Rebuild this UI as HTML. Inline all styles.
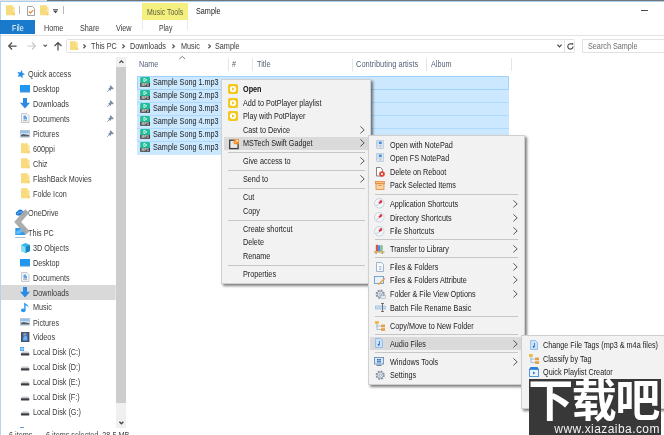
<!DOCTYPE html>
<html lang="en"><head><meta charset="utf-8"><title>Sample</title><style>
*{margin:0;padding:0;box-sizing:border-box}
html,body{width:664px;height:435px;overflow:hidden;background:#fff}
body{position:relative;font-family:"Liberation Sans","Noto Sans CJK SC",sans-serif;font-size:8.8px;color:#3a3a3a}
.a{position:absolute}
.t{position:absolute;white-space:nowrap;line-height:10px;height:10px;transform-origin:0 0;transform:scaleX(.823)}
.menu{position:absolute;background:#f2f2f2;border:1px solid #d0d0d0;box-shadow:2px 2px 2.500px rgba(0,0,0,.5)}
.sep{position:absolute;height:1px;background:#c6c6c6}
.hl{position:absolute;background:#d9d9d9}
.row{position:absolute;background:#cce8ff;border:1px solid #a9d6fc}
svg{position:absolute;overflow:visible}
</style></head><body>
<div id="w" style="position:absolute;left:0;top:0;width:664px;height:435px;filter:blur(.33px)">
<div class="a" style="left:-3.0px;top:-2.0px;width:50.0px;height:3.0px;background:#e4e4e4;"></div>
<div class="a" style="left:46.5px;top:-2.0px;width:621.0px;height:3.0px;background:#747474;"></div>
<div class="a" style="left:-3.0px;top:1.0px;width:670.0px;height:1.0px;background:#a9cdec;"></div>
<div class="a" style="left:-2.0px;top:2.0px;width:3.0px;height:440.0px;background:#b4d3ee;"></div>
<svg style="left:6.0px;top:5.0px" width="8.6" height="10.2" viewBox="0 0 9 10" preserveAspectRatio="none"><path d="M0 0.300h7.200v1.700H9v8H0z" fill="#f7db7d"/><path d="M7.200 2H9v8H7.200z" fill="#fae69f"/><path d="M7.200 7.500H9v2.500H7.200z" fill="#f3cf63"/></svg>
<div class="a" style="left:19.0px;top:6.0px;width:1.0px;height:8.0px;background:#b8b8b8;"></div>
<svg style="left:27px;top:5.5px" width="8" height="10" viewBox="0 0 8 10"><path d="M.5.5h5l2 2v7H.5z" fill="#fff" stroke="#8a8a8a" stroke-width=".8"/><path d="M2 5.5l1.5 1.6L6.3 4" fill="none" stroke="#e8842c" stroke-width="1.1"/></svg>
<svg style="left:40.1px;top:5.0px" width="8.4" height="10.2" viewBox="0 0 9 10" preserveAspectRatio="none"><path d="M0 0.300h7.200v1.700H9v8H0z" fill="#f7db7d"/><path d="M7.200 2H9v8H7.200z" fill="#fae69f"/><path d="M7.200 7.500H9v2.500H7.200z" fill="#f3cf63"/></svg>
<svg style="left:53.200px;top:9px" width="5" height="4.200" viewBox="0 0 5 4.200"><path d="M0 0h5v.8H0z" fill="#555"/><path d="M0 1.600h5L2.500 4.200z" fill="#444"/></svg>
<div class="a" style="left:63.0px;top:6.0px;width:1.0px;height:8.0px;background:#b8b8b8;"></div>
<div class="a" style="left:142.4px;top:3.2px;width:45.2px;height:16.6px;background:#f4f07f;"></div>
<div class="t" style="left:146.8px;top:6.7px;color:#5f5f3c;transform:scaleX(.79)">Music Tools</div>
<div class="t" style="left:195.7px;top:6.1px;color:#222">Sample</div>
<div class="a" style="left:641.0px;top:9.7px;width:6.5px;height:1.0px;background:#4a4a4a;"></div>
<div class="a" style="left:0.0px;top:20.0px;width:35.0px;height:14.3px;background:#1979ca;"></div>
<div class="t" style="left:11.5px;top:22.6px;color:#fff">File</div>
<div class="t" style="left:43.7px;top:22.6px;">Home</div>
<div class="t" style="left:80.0px;top:22.6px;">Share</div>
<div class="t" style="left:116.0px;top:22.6px;">View</div>
<div class="t" style="left:159.0px;top:22.6px;transform:scaleX(.78)">Play</div>
<div class="a" style="left:142.4px;top:20.0px;width:1.0px;height:10.0px;background:#eaeaea;"></div>
<div class="a" style="left:186.8px;top:20.0px;width:1.0px;height:10.0px;background:#eaeaea;"></div>
<div class="a" style="left:1.0px;top:34.5px;width:663.0px;height:1.0px;background:#e2e2e2;"></div>
<svg style="left:8.0px;top:42.0px" width="9" height="8" viewBox="0 0 9 8"><path d="M4 .5L.7 4 4 7.5M.7 4H8.600" fill="none" stroke="#505050" stroke-width="1.250"/></svg>
<svg style="left:27px;top:42px" width="9" height="8" viewBox="0 0 9 8"><path d="M5 .5L8.300 4 5 7.5M8.300 4H.4" fill="none" stroke="#c9c9c9" stroke-width="1.200"/></svg>
<svg style="left:43px;top:43.600px" width="4.500" height="3.500" viewBox="0 0 5 4"><path d="M.5 .8L2.500 2.800 4.500 .8" fill="none" stroke="#5a5a5a" stroke-width="1.200"/></svg>
<svg style="left:54px;top:41.5px" width="8" height="9" viewBox="0 0 8 9"><path d="M.5 4L4 .7 7.5 4M4 .7V8.600" fill="none" stroke="#505050" stroke-width="1.250"/></svg>
<div class="a" style="left:65.5px;top:38.5px;width:509.5px;height:14.0px;background:#fff;border:1px solid #e2e2e2;border-radius:1.5px"></div>
<div class="a" style="left:563.5px;top:39.0px;width:1.0px;height:13.0px;background:#e4e4e4;"></div>
<svg style="left:69.5px;top:41.0px" width="8" height="9" viewBox="0 0 9 10" preserveAspectRatio="none"><path d="M0 0.300h7.200v1.700H9v8H0z" fill="#f7db7d"/><path d="M7.200 2H9v8H7.200z" fill="#fae69f"/><path d="M7.200 7.500H9v2.500H7.200z" fill="#f3cf63"/></svg>
<svg style="left:82.5px;top:43.5px" width="2.8" height="4.6" viewBox="0 0 2.8 4.6"><path d="M.4 .4L2.4 2.3 .4 4.199999999999999" fill="none" stroke="#555" stroke-width="1.25"/></svg>
<div class="t" style="left:91.0px;top:40.8px;">This PC</div>
<svg style="left:121.5px;top:43.5px" width="2.8" height="4.6" viewBox="0 0 2.8 4.6"><path d="M.4 .4L2.4 2.3 .4 4.199999999999999" fill="none" stroke="#555" stroke-width="1.25"/></svg>
<div class="t" style="left:129.5px;top:40.8px;">Downloads</div>
<svg style="left:171.5px;top:43.5px" width="2.8" height="4.6" viewBox="0 0 2.8 4.6"><path d="M.4 .4L2.4 2.3 .4 4.199999999999999" fill="none" stroke="#555" stroke-width="1.25"/></svg>
<div class="t" style="left:180.7px;top:40.8px;">Music</div>
<svg style="left:207.5px;top:43.5px" width="2.8" height="4.6" viewBox="0 0 2.8 4.6"><path d="M.4 .4L2.4 2.3 .4 4.199999999999999" fill="none" stroke="#555" stroke-width="1.25"/></svg>
<div class="t" style="left:215.0px;top:40.8px;">Sample</div>
<svg style="left:556.5px;top:44.3px" width="5" height="4" viewBox="0 0 5 4"><path d="M.4 .7L2.5 2.9 4.6 .7" fill="none" stroke="#444" stroke-width="1.15"/></svg>
<svg style="left:566.5px;top:42.5px" width="7" height="7" viewBox="0 0 7 7"><path d="M6 3.5A2.6 2.6 0 1 1 4.6 1.2" fill="none" stroke="#4a4a4a" stroke-width="1.1"/><path d="M3.8 0h2.4v2.4z" fill="#555"/></svg>
<div class="a" style="left:582.0px;top:38.5px;width:90.0px;height:14.0px;background:#fff;border:1px solid #e2e2e2"></div>
<div class="t" style="left:588.0px;top:40.6px;color:#6d6d6d">Search Sample</div>
<div class="a" style="left:116.1px;top:57.0px;width:9.7px;height:371.0px;background:#f0f0f0;"></div>
<div class="a" style="left:116.1px;top:67.0px;width:9.7px;height:335.5px;background:#cdcdcd;"></div>
<svg style="left:118.600px;top:60.200px" width="4.800" height="3.600" viewBox="0 0 6 4"><path d="M.5 3.300L3 .8 5.500 3.300" fill="none" stroke="#444" stroke-width="1.600"/></svg>
<svg style="left:118.600px;top:420.800px" width="4.800" height="3.600" viewBox="0 0 6 4"><path d="M.5 .7L3 3.200 5.500 .7" fill="none" stroke="#444" stroke-width="1.600"/></svg>
<div class="a" style="left:1.0px;top:285.0px;width:114.0px;height:14.8px;background:#d9d9d9;"></div>
<div class="a" style="left:115.0px;top:285.0px;width:1.2px;height:14.8px;background:#e6e6e6;"></div>
<svg style="left:16.6px;top:69.6px" width="8" height="8" viewBox="0 0 8 8"><path d="M4 0l1.2 2.7 2.8.3-2.1 1.9.6 2.9L4 6.3 1.5 7.8l.6-2.9L0 3l2.8-.3z" fill="#2a8fe8" transform="rotate(14 4 4)"/></svg>
<div class="t" style="left:28.3px;top:68.9px;">Quick access</div>
<svg style="left:20.0px;top:84.7px" width="10" height="8" viewBox="0 0 10 8"><rect x="0" y="0" width="10" height="6.6" fill="#1e96f2"/><rect x="0" y="6.4" width="10" height="1" fill="#1478cf"/></svg>
<div class="t" style="left:33.3px;top:84.4px;">Desktop</div>
<svg style="left:20.0px;top:98.2px" width="10" height="10.500" viewBox="0 0 10 10.500"><path d="M3 0h4v4.800h3L5 10.500 0 4.800h3z" fill="#2b8be3"/></svg>
<div class="t" style="left:33.3px;top:99.2px;">Downloads</div>
<svg style="left:20.8px;top:113.3px" width="8.500" height="10" viewBox="0 0 8.500 10"><path d="M.5.500h5.500l2 2v7H.5z" fill="#f4f5f6" stroke="#b9bdc2" stroke-width=".8"/><path d="M2.500 2.500h2.500v1.500h1v2.500h-3.500z" fill="#5ea4e6"/><path d="M2.200 7.600h4" stroke="#8e979f" stroke-width=".7"/></svg>
<div class="t" style="left:33.3px;top:114.0px;">Documents</div>
<svg style="left:20.0px;top:129.5px" width="10" height="7.500" viewBox="0 0 10 7.500"><rect x=".4" y=".4" width="9.200" height="6.700" fill="#e4eef8" stroke="#a8b4c0" stroke-width=".7"/><rect x="1" y="1" width="8" height="2.300" fill="#8fc2ee"/><path d="M1 6.500V4.800l2.500-.8 5.500 1v1.500z" fill="#55606b"/></svg>
<div class="t" style="left:33.3px;top:129.0px;">Pictures</div>
<svg style="left:20.9px;top:143.2px" width="8.4" height="10.2" viewBox="0 0 9 10" preserveAspectRatio="none"><path d="M0 0.300h7.200v1.700H9v8H0z" fill="#f7db7d"/><path d="M7.200 2H9v8H7.200z" fill="#fae69f"/><path d="M7.200 7.500H9v2.500H7.200z" fill="#f3cf63"/></svg>
<div class="t" style="left:33.3px;top:144.0px;">600ppi</div>
<svg style="left:20.9px;top:158.1px" width="8.4" height="10.2" viewBox="0 0 9 10" preserveAspectRatio="none"><path d="M0 0.300h7.200v1.700H9v8H0z" fill="#f7db7d"/><path d="M7.200 2H9v8H7.200z" fill="#fae69f"/><path d="M7.200 7.500H9v2.500H7.200z" fill="#f3cf63"/></svg>
<div class="t" style="left:33.3px;top:158.9px;">Chiz</div>
<svg style="left:20.9px;top:172.9px" width="8.4" height="10.2" viewBox="0 0 9 10" preserveAspectRatio="none"><path d="M0 0.300h7.200v1.700H9v8H0z" fill="#f7db7d"/><path d="M7.200 2H9v8H7.200z" fill="#fae69f"/><path d="M7.200 7.500H9v2.500H7.200z" fill="#f3cf63"/></svg>
<div class="t" style="left:33.3px;top:173.7px;">FlashBack Movies</div>
<svg style="left:20.9px;top:187.8px" width="8.4" height="10.2" viewBox="0 0 9 10" preserveAspectRatio="none"><path d="M0 0.300h7.200v1.700H9v8H0z" fill="#f7db7d"/><path d="M7.200 2H9v8H7.200z" fill="#fae69f"/><path d="M7.200 7.500H9v2.500H7.200z" fill="#f3cf63"/></svg>
<div class="t" style="left:33.3px;top:188.6px;">Folde Icon</div>
<svg style="left:14.6px;top:208.8px" width="10.500" height="6.500" viewBox="0 0 11 7" preserveAspectRatio="none"><path d="M2.500 7a2.300 2.300 0 0 1 .2-4.500A3 3 0 0 1 8.300 2.200 2.400 2.400 0 0 1 8.800 7z" fill="#1b7bdc"/><path d="M2 5.500C4 3.500 6 3 8 3.200" stroke="#dbeafb" stroke-width=".6" fill="none"/></svg>
<div class="t" style="left:28.0px;top:207.9px;">OneDrive</div>
<svg style="left:14.7px;top:228.0px" width="10.500" height="10" viewBox="0 0 10.500 10"><rect x=".3" y="0" width="10" height="7" fill="#2e9bf0"/><path d="M1.300 6V3.500L6 1h3.200v1.500L4 6z" fill="#62bdf9"/><rect x="0" y="9" width="10.500" height=".9" fill="#a9bccd"/></svg>
<div class="t" style="left:28.0px;top:228.4px;">This PC</div>
<svg style="left:20.5px;top:242.6px" width="9" height="10" viewBox="0 0 9 10"><path d="M4.500 0L9 2v6L4.500 10 0 8V2z" fill="#37b6e6"/><path d="M4.500 4L9 2v6L4.500 10z" fill="#1587c4"/><path d="M0 2l4.500 2V10L0 8z" fill="#8adcf5"/></svg>
<div class="t" style="left:33.3px;top:243.3px;">3D Objects</div>
<svg style="left:20.0px;top:258.5px" width="10" height="8" viewBox="0 0 10 8"><rect x="0" y="0" width="10" height="6.6" fill="#1e96f2"/><rect x="0" y="6.4" width="10" height="1" fill="#1478cf"/></svg>
<div class="t" style="left:33.3px;top:258.2px;">Desktop</div>
<svg style="left:20.8px;top:272.3px" width="8.500" height="10" viewBox="0 0 8.500 10"><path d="M.5.500h5.500l2 2v7H.5z" fill="#f4f5f6" stroke="#b9bdc2" stroke-width=".8"/><path d="M2.500 2.500h2.500v1.500h1v2.500h-3.500z" fill="#5ea4e6"/><path d="M2.200 7.600h4" stroke="#8e979f" stroke-width=".7"/></svg>
<div class="t" style="left:33.3px;top:273.0px;">Documents</div>
<svg style="left:20.0px;top:286.9px" width="10" height="10.500" viewBox="0 0 10 10.500"><path d="M3 0h4v4.800h3L5 10.500 0 4.800h3z" fill="#2b8be3"/></svg>
<div class="t" style="left:33.3px;top:287.9px;">Downloads</div>
<svg style="left:21.2px;top:301.7px" width="8" height="10.500" viewBox="0 0 7 10" preserveAspectRatio="none"><path d="M2.800 0c.6 2 3.800 2.300 3.800 5.200-.7-1.600-2.100-1.800-2.600-1.900V8A2 1.700 0 1 1 2.800 6.400z" fill="#2a97f0"/></svg>
<div class="t" style="left:33.3px;top:302.4px;">Music</div>
<svg style="left:20.0px;top:318.1px" width="10" height="7.500" viewBox="0 0 10 7.500"><rect x=".4" y=".4" width="9.200" height="6.700" fill="#e4eef8" stroke="#a8b4c0" stroke-width=".7"/><rect x="1" y="1" width="8" height="2.300" fill="#8fc2ee"/><path d="M1 6.500V4.800l2.500-.8 5.500 1v1.500z" fill="#55606b"/></svg>
<div class="t" style="left:33.3px;top:317.6px;">Pictures</div>
<svg style="left:20.9px;top:331.9px" width="8.400" height="10" viewBox="0 0 9 10" preserveAspectRatio="none"><rect width="9" height="10" fill="#4a4f57"/><rect x="1.800" y=".8" width="5.400" height="8.400" fill="#3f7fd0"/><path d="M2.500 6l2-2.500 2 1.500v3h-4z" fill="#6fb0ee"/><rect x="3" y="1.500" width="2" height="1.500" fill="#e8a33a"/></svg>
<div class="t" style="left:33.3px;top:331.8px;">Videos</div>
<svg style="left:20.0px;top:347.1px" width="10" height="9" viewBox="0 0 10 9"><path d="M0 0h1.800v1.800H0zM2.300 0h1.800v1.800H2.300zM0 2.300h1.800v1.800H0zM2.300 2.300h1.800v1.800H2.300z" fill="#3a9ff3"/><path d="M2 4.600h6.200L9.300 6.300H.9z" fill="#c6cacf"/><rect x=".9" y="6.200" width="8.400" height="2.300" rx=".4" fill="#3b3f44"/></svg>
<div class="t" style="left:33.3px;top:347.3px;">Local Disk (C:)</div>
<svg style="left:20.0px;top:362.0px" width="10" height="9" viewBox="0 0 10 9"><path d="M2 4.600h6.200L9.300 6.300H.9z" fill="#c6cacf"/><rect x=".9" y="6.200" width="8.400" height="2.300" rx=".4" fill="#3b3f44"/></svg>
<div class="t" style="left:33.3px;top:362.2px;">Local Disk (D:)</div>
<svg style="left:20.0px;top:376.9px" width="10" height="9" viewBox="0 0 10 9"><path d="M2 4.600h6.200L9.300 6.300H.9z" fill="#c6cacf"/><rect x=".9" y="6.200" width="8.400" height="2.300" rx=".4" fill="#3b3f44"/></svg>
<div class="t" style="left:33.3px;top:377.1px;">Local Disk (E:)</div>
<svg style="left:20.0px;top:391.7px" width="10" height="9" viewBox="0 0 10 9"><path d="M2 4.600h6.200L9.300 6.300H.9z" fill="#c6cacf"/><rect x=".9" y="6.200" width="8.400" height="2.300" rx=".4" fill="#3b3f44"/></svg>
<div class="t" style="left:33.3px;top:391.9px;">Local Disk (F:)</div>
<svg style="left:20.0px;top:406.6px" width="10" height="9" viewBox="0 0 10 9"><path d="M2 4.600h6.200L9.300 6.300H.9z" fill="#c6cacf"/><rect x=".9" y="6.200" width="8.400" height="2.300" rx=".4" fill="#3b3f44"/></svg>
<div class="t" style="left:33.3px;top:406.8px;">Local Disk (G:)</div>
<svg style="left:107.300px;top:85.0px" width="7" height="7" viewBox="0 0 7 7"><path d="M3.600 .3L6.700 3.400 5.700 4.400 5 3.800 3.600 5.200 3.400 6.200 .9 3.600 1.800 3.400 3.200 2 2.600 1.300z" fill="#7a8ca6"/><path d="M2.300 4.700L.2 6.800" stroke="#7a8ca6" stroke-width=".8"/></svg>
<svg style="left:107.300px;top:99.8px" width="7" height="7" viewBox="0 0 7 7"><path d="M3.600 .3L6.700 3.400 5.700 4.400 5 3.800 3.600 5.200 3.400 6.200 .9 3.600 1.800 3.400 3.200 2 2.600 1.300z" fill="#7a8ca6"/><path d="M2.300 4.700L.2 6.800" stroke="#7a8ca6" stroke-width=".8"/></svg>
<svg style="left:107.300px;top:114.6px" width="7" height="7" viewBox="0 0 7 7"><path d="M3.600 .3L6.700 3.400 5.700 4.400 5 3.800 3.600 5.200 3.400 6.200 .9 3.600 1.800 3.400 3.200 2 2.600 1.300z" fill="#7a8ca6"/><path d="M2.300 4.700L.2 6.800" stroke="#7a8ca6" stroke-width=".8"/></svg>
<svg style="left:107.300px;top:129.6px" width="7" height="7" viewBox="0 0 7 7"><path d="M3.600 .3L6.700 3.400 5.700 4.400 5 3.800 3.600 5.200 3.400 6.200 .9 3.600 1.800 3.400 3.200 2 2.600 1.300z" fill="#7a8ca6"/><path d="M2.300 4.700L.2 6.800" stroke="#7a8ca6" stroke-width=".8"/></svg>
<div class="a" style="left:20.0px;top:426.5px;width:4.0px;height:1.0px;background:#5aa0e0;"></div>
<svg style="left:0;top:200px" width="40" height="45" viewBox="0 200 40 45"><path d="M27.200 211L17.700 222 27.600 233" fill="none" stroke="#a9a9a9" stroke-width="5.200" stroke-linejoin="miter" opacity=".96"/></svg>
<div class="t" style="left:9.0px;top:430.3px;color:#444">6 items</div>
<div class="t" style="left:46.0px;top:430.3px;color:#444">6 items selected&nbsp; 28.5 MB</div>
<div class="t" style="left:139.0px;top:59.0px;color:#56637a">Name</div>
<div class="t" style="left:232.0px;top:59.0px;color:#56637a">#</div>
<div class="t" style="left:257.0px;top:59.0px;color:#56637a">Title</div>
<div class="t" style="left:356.3px;top:59.0px;color:#56637a;transform:scaleX(.85)">Contributing artists</div>
<div class="t" style="left:430.7px;top:59.0px;color:#56637a">Album</div>
<svg style="left:178.500px;top:56px" width="6.500" height="3.200" viewBox="0 0 6 3"><path d="M.3 2.800L3 .4 5.700 2.800" fill="none" stroke="#6a6a6a" stroke-width=".8"/></svg>
<div class="a" style="left:228.0px;top:58.0px;width:1.0px;height:13.0px;background:#e5e5e5;"></div>
<div class="a" style="left:252.3px;top:58.0px;width:1.0px;height:13.0px;background:#e5e5e5;"></div>
<div class="a" style="left:351.8px;top:58.0px;width:1.0px;height:13.0px;background:#e5e5e5;"></div>
<div class="a" style="left:426.0px;top:58.0px;width:1.0px;height:13.0px;background:#e5e5e5;"></div>
<div class="a" style="left:510.8px;top:58.0px;width:1.0px;height:13.0px;background:#e5e5e5;"></div>
<div class="a" style="left:137.1px;top:76.0px;width:372.4px;height:78.2px;background:#cce8ff;border-radius:1px"></div>
<div class="a" style="left:137.1px;top:89.0px;width:372.4px;height:1.0px;background:#b0dafd;"></div>
<div class="a" style="left:137.1px;top:102.0px;width:372.4px;height:1.0px;background:#b0dafd;"></div>
<div class="a" style="left:137.1px;top:115.0px;width:372.4px;height:1.0px;background:#b0dafd;"></div>
<div class="a" style="left:137.1px;top:128.0px;width:372.4px;height:1.0px;background:#b0dafd;"></div>
<div class="a" style="left:137.1px;top:141.0px;width:372.4px;height:1.0px;background:#b0dafd;"></div>
<div class="a" style="left:137.1px;top:154.0px;width:372.4px;height:1.0px;background:#b0dafd;opacity:.6"></div>
<div class="a" style="left:137.1px;top:76.0px;width:372.4px;height:13.6px;background:transparent;border:1px solid #9fd2fd;border-radius:1px"></div>
<svg style="left:139.800px;top:77.2px" width="10.200" height="9.800" viewBox="0 0 10 10"><rect width="10" height="7" rx="1.200" fill="#1fbf98"/><path d="M3.800 1.200L6.800 3 3.800 4.800z" fill="none" stroke="#fff" stroke-width=".8"/><rect y="6" width="10" height="4" fill="#3a3f3e"/><text x="5" y="9.300" text-anchor="middle" font-family="Liberation Sans, sans-serif" font-size="3.600" font-weight="700" fill="#ececec">MP3</text></svg>
<div class="t" style="left:152.6px;top:77.4px;color:#222">Sample Song 1.mp3</div>
<svg style="left:139.800px;top:90.2px" width="10.200" height="9.800" viewBox="0 0 10 10"><rect width="10" height="7" rx="1.200" fill="#1fbf98"/><path d="M3.800 1.200L6.800 3 3.800 4.800z" fill="none" stroke="#fff" stroke-width=".8"/><rect y="6" width="10" height="4" fill="#3a3f3e"/><text x="5" y="9.300" text-anchor="middle" font-family="Liberation Sans, sans-serif" font-size="3.600" font-weight="700" fill="#ececec">MP3</text></svg>
<div class="t" style="left:152.6px;top:90.4px;color:#222">Sample Song 2.mp3</div>
<svg style="left:139.800px;top:103.2px" width="10.200" height="9.800" viewBox="0 0 10 10"><rect width="10" height="7" rx="1.200" fill="#1fbf98"/><path d="M3.800 1.200L6.800 3 3.800 4.800z" fill="none" stroke="#fff" stroke-width=".8"/><rect y="6" width="10" height="4" fill="#3a3f3e"/><text x="5" y="9.300" text-anchor="middle" font-family="Liberation Sans, sans-serif" font-size="3.600" font-weight="700" fill="#ececec">MP3</text></svg>
<div class="t" style="left:152.6px;top:103.4px;color:#222">Sample Song 3.mp3</div>
<svg style="left:139.800px;top:116.2px" width="10.200" height="9.800" viewBox="0 0 10 10"><rect width="10" height="7" rx="1.200" fill="#1fbf98"/><path d="M3.800 1.200L6.800 3 3.800 4.800z" fill="none" stroke="#fff" stroke-width=".8"/><rect y="6" width="10" height="4" fill="#3a3f3e"/><text x="5" y="9.300" text-anchor="middle" font-family="Liberation Sans, sans-serif" font-size="3.600" font-weight="700" fill="#ececec">MP3</text></svg>
<div class="t" style="left:152.6px;top:116.4px;color:#222">Sample Song 4.mp3</div>
<svg style="left:139.800px;top:129.2px" width="10.200" height="9.800" viewBox="0 0 10 10"><rect width="10" height="7" rx="1.200" fill="#1fbf98"/><path d="M3.800 1.200L6.800 3 3.800 4.800z" fill="none" stroke="#fff" stroke-width=".8"/><rect y="6" width="10" height="4" fill="#3a3f3e"/><text x="5" y="9.300" text-anchor="middle" font-family="Liberation Sans, sans-serif" font-size="3.600" font-weight="700" fill="#ececec">MP3</text></svg>
<div class="t" style="left:152.6px;top:129.4px;color:#222">Sample Song 5.mp3</div>
<svg style="left:139.800px;top:142.2px" width="10.200" height="9.800" viewBox="0 0 10 10"><rect width="10" height="7" rx="1.200" fill="#1fbf98"/><path d="M3.800 1.200L6.800 3 3.800 4.800z" fill="none" stroke="#fff" stroke-width=".8"/><rect y="6" width="10" height="4" fill="#3a3f3e"/><text x="5" y="9.300" text-anchor="middle" font-family="Liberation Sans, sans-serif" font-size="3.600" font-weight="700" fill="#ececec">MP3</text></svg>
<div class="t" style="left:152.6px;top:142.4px;color:#222">Sample Song 6.mp3</div>
<div class="menu" style="left:221.300px;top:79.200px;width:149.500px;height:204.400px"></div>
<div class="a" style="left:223.5px;top:137.0px;width:146.0px;height:12.8px;background:#dadada;"></div>
<svg style="left:228.3px;top:83.8px" width="10" height="10" viewBox="0 0 10 10"><rect width="10" height="10" rx="1.800" fill="#f3c81f"/><circle cx="5" cy="5" r="3.100" fill="#fff"/><path d="M4 3.200L6.800 5 4 6.800z" fill="#f3c81f"/></svg>
<svg style="left:228.3px;top:97.5px" width="10" height="10" viewBox="0 0 10 10"><rect width="10" height="10" rx="1.800" fill="#f3c81f"/><circle cx="5" cy="5" r="3.100" fill="#fff"/><path d="M4 3.200L6.800 5 4 6.800z" fill="#f3c81f"/></svg>
<svg style="left:228.3px;top:111.2px" width="10" height="10" viewBox="0 0 10 10"><rect width="10" height="10" rx="1.800" fill="#f3c81f"/><circle cx="5" cy="5" r="3.100" fill="#fff"/><path d="M4 3.200L6.800 5 4 6.800z" fill="#f3c81f"/></svg>
<svg style="left:228.500px;top:138.500px" width="10" height="10" viewBox="0 0 10 10"><rect x=".7" y="1.200" width="8.400" height="8.400" fill="#e9e9e9" stroke="#3c3c3c" stroke-width="1.300"/><rect x="4.600" y="0" width="5.400" height="5.200" fill="#f08a24"/><path d="M5.500 4.300L8.800 1M6.800 1h2v2" stroke="#fff" stroke-width=".7" fill="none"/></svg>
<div class="t" style="left:243.1px;top:84.2px;color:#222"><b style="color:#111">Open</b></div>
<div class="t" style="left:243.1px;top:97.5px;color:#222">Add to PotPlayer playlist</div>
<div class="t" style="left:243.1px;top:111.2px;color:#222">Play with PotPlayer</div>
<div class="t" style="left:243.1px;top:124.7px;color:#222">Cast to Device</div>
<div class="t" style="left:243.1px;top:138.1px;color:#222">MSTech Swift Gadget</div>
<div class="t" style="left:243.1px;top:156.0px;color:#222">Give access to</div>
<div class="t" style="left:243.1px;top:174.0px;color:#222">Send to</div>
<div class="t" style="left:243.1px;top:192.0px;color:#222">Cut</div>
<div class="t" style="left:243.1px;top:205.5px;color:#222">Copy</div>
<div class="t" style="left:243.1px;top:223.7px;color:#222">Create shortcut</div>
<div class="t" style="left:243.1px;top:237.2px;color:#222">Delete</div>
<div class="t" style="left:243.1px;top:250.8px;color:#222">Rename</div>
<div class="t" style="left:243.1px;top:269.0px;color:#222">Properties</div>
<div class="sep" style="left:228px;top:152.3px;width:137px"></div>
<div class="sep" style="left:228px;top:170.3px;width:137px"></div>
<div class="sep" style="left:228px;top:187.9px;width:137px"></div>
<div class="sep" style="left:228px;top:220.1px;width:137px"></div>
<div class="sep" style="left:228px;top:265.0px;width:137px"></div>
<svg style="left:359.8px;top:125.9px" width="4.6" height="7.8" viewBox="0 0 4.6 7.8"><path d="M.4 .4L4.199999999999999 3.9 .4 7.3999999999999995" fill="none" stroke="#4a4a4a" stroke-width="0.9"/></svg>
<svg style="left:359.8px;top:139.3px" width="4.6" height="7.8" viewBox="0 0 4.6 7.8"><path d="M.4 .4L4.199999999999999 3.9 .4 7.3999999999999995" fill="none" stroke="#4a4a4a" stroke-width="0.9"/></svg>
<svg style="left:359.8px;top:157.2px" width="4.6" height="7.8" viewBox="0 0 4.6 7.8"><path d="M.4 .4L4.199999999999999 3.9 .4 7.3999999999999995" fill="none" stroke="#4a4a4a" stroke-width="0.9"/></svg>
<svg style="left:359.8px;top:175.2px" width="4.6" height="7.8" viewBox="0 0 4.6 7.8"><path d="M.4 .4L4.199999999999999 3.9 .4 7.3999999999999995" fill="none" stroke="#4a4a4a" stroke-width="0.9"/></svg>
<div class="menu" style="left:368px;top:135.200px;width:156.500px;height:249.500px"></div>
<div class="a" style="left:370.0px;top:337.4px;width:152.5px;height:12.6px;background:#dadada;"></div>
<div class="t" style="left:390.0px;top:139.6px;color:#222">Open with NotePad</div>
<div class="t" style="left:390.0px;top:153.0px;color:#222">Open FS NotePad</div>
<div class="t" style="left:390.0px;top:166.9px;color:#222">Delete on Reboot</div>
<div class="t" style="left:390.0px;top:180.3px;color:#222">Pack Selected Items</div>
<div class="t" style="left:390.0px;top:198.6px;color:#222">Application Shortcuts</div>
<svg style="left:513.2px;top:199.6px" width="4.6" height="7.8" viewBox="0 0 4.6 7.8"><path d="M.4 .4L4.199999999999999 3.9 .4 7.3999999999999995" fill="none" stroke="#4a4a4a" stroke-width="0.9"/></svg>
<div class="t" style="left:390.0px;top:212.6px;color:#222">Directory Shortcuts</div>
<svg style="left:513.2px;top:213.6px" width="4.6" height="7.8" viewBox="0 0 4.6 7.8"><path d="M.4 .4L4.199999999999999 3.9 .4 7.3999999999999995" fill="none" stroke="#4a4a4a" stroke-width="0.9"/></svg>
<div class="t" style="left:390.0px;top:225.9px;color:#222">File Shortcuts</div>
<svg style="left:513.2px;top:226.9px" width="4.6" height="7.8" viewBox="0 0 4.6 7.8"><path d="M.4 .4L4.199999999999999 3.9 .4 7.3999999999999995" fill="none" stroke="#4a4a4a" stroke-width="0.9"/></svg>
<div class="t" style="left:390.0px;top:243.9px;color:#222">Transfer to Library</div>
<svg style="left:513.2px;top:244.9px" width="4.6" height="7.8" viewBox="0 0 4.6 7.8"><path d="M.4 .4L4.199999999999999 3.9 .4 7.3999999999999995" fill="none" stroke="#4a4a4a" stroke-width="0.9"/></svg>
<div class="t" style="left:390.0px;top:261.7px;color:#222">Files &amp; Folders</div>
<svg style="left:513.2px;top:262.7px" width="4.6" height="7.8" viewBox="0 0 4.6 7.8"><path d="M.4 .4L4.199999999999999 3.9 .4 7.3999999999999995" fill="none" stroke="#4a4a4a" stroke-width="0.9"/></svg>
<div class="t" style="left:390.0px;top:275.4px;color:#222">Files &amp; Folders Attribute</div>
<svg style="left:513.2px;top:276.4px" width="4.6" height="7.8" viewBox="0 0 4.6 7.8"><path d="M.4 .4L4.199999999999999 3.9 .4 7.3999999999999995" fill="none" stroke="#4a4a4a" stroke-width="0.9"/></svg>
<div class="t" style="left:390.0px;top:289.2px;color:#222">Folder &amp; File View Options</div>
<svg style="left:513.2px;top:290.2px" width="4.6" height="7.8" viewBox="0 0 4.6 7.8"><path d="M.4 .4L4.199999999999999 3.9 .4 7.3999999999999995" fill="none" stroke="#4a4a4a" stroke-width="0.9"/></svg>
<div class="t" style="left:390.0px;top:302.7px;color:#222">Batch File Rename Basic</div>
<div class="t" style="left:390.0px;top:320.6px;color:#222">Copy/Move to New Folder</div>
<div class="t" style="left:390.0px;top:338.5px;color:#222">Audio Files</div>
<svg style="left:513.2px;top:339.5px" width="4.6" height="7.8" viewBox="0 0 4.6 7.8"><path d="M.4 .4L4.199999999999999 3.9 .4 7.3999999999999995" fill="none" stroke="#4a4a4a" stroke-width="0.9"/></svg>
<div class="t" style="left:390.0px;top:356.5px;color:#222">Windows Tools</div>
<svg style="left:513.2px;top:357.5px" width="4.6" height="7.8" viewBox="0 0 4.6 7.8"><path d="M.4 .4L4.199999999999999 3.9 .4 7.3999999999999995" fill="none" stroke="#4a4a4a" stroke-width="0.9"/></svg>
<div class="t" style="left:390.0px;top:370.3px;color:#222">Settings</div>
<div class="sep" style="left:374.500px;top:194.0px;width:143.500px"></div>
<div class="sep" style="left:374.500px;top:239.4px;width:143.500px"></div>
<div class="sep" style="left:374.500px;top:257.4px;width:143.500px"></div>
<div class="sep" style="left:374.500px;top:316.4px;width:143.500px"></div>
<div class="sep" style="left:374.500px;top:334.0px;width:143.500px"></div>
<div class="sep" style="left:374.500px;top:352.3px;width:143.500px"></div>
<svg style="left:375.9px;top:140.0px" width="8" height="9" viewBox="0 0 8 9"><rect x=".8" y=".4" width="6.800" height="8.200" fill="#e3eaf2" stroke="#b3c4d6" stroke-width=".7"/><path d="M0 2h1.500M0 4h1.500M0 6h1.500" stroke="#8fb0d0" stroke-width=".6"/><rect x="2.800" y="1.500" width="3" height="2.600" fill="#3f90e0"/><path d="M2.800 5.500h3M2.800 7h3" stroke="#a9bdd2" stroke-width=".7"/></svg>
<svg style="left:375.9px;top:153.4px" width="8" height="9" viewBox="0 0 8 9"><rect x=".8" y=".4" width="6.800" height="8.200" fill="#e3eaf2" stroke="#b3c4d6" stroke-width=".7"/><path d="M0 2h1.500M0 4h1.500M0 6h1.500" stroke="#8fb0d0" stroke-width=".6"/><rect x="2.800" y="1.500" width="3" height="2.600" fill="#3f90e0"/><path d="M2.800 5.500h3M2.800 7h3" stroke="#a9bdd2" stroke-width=".7"/></svg>
<svg style="left:375.9px;top:166.8px" width="9" height="10" viewBox="0 0 9 10"><path d="M.5.5h4l2 2v6.500H.5z" fill="#fff" stroke="#666" stroke-width=".8"/><circle cx="6" cy="7" r="2.800" fill="#e23b2e"/><path d="M4.900 5.900l2.200 2.200M7.100 5.900L4.900 8.100" stroke="#fff" stroke-width=".8"/></svg>
<svg style="left:374.7px;top:180.7px" width="10" height="9" viewBox="0 0 10 9"><rect x=".4" y=".4" width="9.200" height="2.400" fill="#f9c084" stroke="#dd8a3a" stroke-width=".7"/><rect x="1" y="2.800" width="8" height="5.800" fill="#fbd3a4" stroke="#d9812a" stroke-width=".7"/><path d="M3.500 4.500h3" stroke="#d9812a" stroke-width=".8"/></svg>
<svg style="left:374.3px;top:198.2px" width="10.600" height="10.600" viewBox="0 0 10 10"><circle cx="5" cy="5" r="4.500" fill="#f3f6f9" stroke="#b7c6d6" stroke-width=".7"/><path d="M2.300 7.700L4.800 5.200" stroke="#9aa7b5" stroke-width=".7"/><path d="M4 4.300l1.700 1.700 .5-1 1.300-.7.300-1.300-1-1-1.200.4-.6 1.400z" fill="#d8333a"/></svg>
<svg style="left:374.3px;top:212.2px" width="10.600" height="10.600" viewBox="0 0 10 10"><circle cx="5" cy="5" r="4.500" fill="#f3f6f9" stroke="#b7c6d6" stroke-width=".7"/><path d="M2.300 7.700L4.800 5.200" stroke="#9aa7b5" stroke-width=".7"/><path d="M4 4.300l1.700 1.700 .5-1 1.300-.7.300-1.300-1-1-1.200.4-.6 1.400z" fill="#d8333a"/></svg>
<svg style="left:374.3px;top:225.5px" width="10.600" height="10.600" viewBox="0 0 10 10"><circle cx="5" cy="5" r="4.500" fill="#f3f6f9" stroke="#b7c6d6" stroke-width=".7"/><path d="M2.300 7.700L4.800 5.200" stroke="#9aa7b5" stroke-width=".7"/><path d="M4 4.300l1.700 1.700 .5-1 1.300-.7.300-1.300-1-1-1.200.4-.6 1.400z" fill="#d8333a"/></svg>
<svg style="left:374.3px;top:243.8px" width="10.500" height="10" viewBox="0 0 10.500 10"><rect x="1.800" y=".8" width="2.300" height="6.500" fill="#d8514e"/><rect x="4.100" y="1.300" width="2.300" height="6" fill="#3b8fdd"/><rect x="6.400" y="1.300" width="2.300" height="6" fill="#86bd93"/><rect x="0" y="7.300" width="10.500" height="1.300" fill="#c9a24e"/><rect x="1.300" y="8.600" width="1.600" height="1.200" fill="#a98a48"/><rect x="7.600" y="8.600" width="1.600" height="1.200" fill="#a98a48"/></svg>
<svg style="left:375.6px;top:261.6px" width="8" height="10" viewBox="0 0 8 10"><path d="M.5.5h5l2 2v7H.5z" fill="#f7fafd" stroke="#8aa3bd" stroke-width=".8"/><path d="M3 4.500h2.500M3 6h2.500M3 7.500h2.500" stroke="#8aa3bd" stroke-width=".6"/></svg>
<svg style="left:374.3px;top:275.8px" width="11" height="9" viewBox="0 0 11 9"><rect x=".4" y=".4" width="9" height="7" fill="#eaf3fb" stroke="#5f8fc2" stroke-width=".8"/><path d="M4.500 7.500L9.500 2.500l1 1-5 5-1.500.5z" fill="#f0a030"/><path d="M9.500 2.500l1 1 .4-.6-.8-.8z" fill="#d9402f"/></svg>
<svg style="left:374.6px;top:288.9px" width="10.400" height="10.400" viewBox="0 0 10 10"><circle cx="5" cy="5" r="3.600" fill="none" stroke="#8490a6" stroke-width="1.700" stroke-dasharray="1.700 1.130"/><circle cx="5" cy="5" r="2.900" fill="#f2f2f2" stroke="#8490a6" stroke-width=".8"/><circle cx="5" cy="5" r="1.200" fill="none" stroke="#8490a6" stroke-width=".7"/><rect x="5.800" y="6.300" width="4" height="3" fill="#e6f0fa" stroke="#8fa9c6" stroke-width=".5"/></svg>
<svg style="left:374.5px;top:303.1px" width="11" height="9" viewBox="0 0 11 9"><rect x=".4" y="3" width="10" height="3" fill="#c4def5" stroke="#8fb3d6" stroke-width=".6"/><path d="M6 .5h3M7.500 .5v8M6 8.500h3" stroke="#555" stroke-width=".8" fill="none"/></svg>
<svg style="left:374.5px;top:320.5px" width="10.600" height="10" viewBox="0 0 10.600 10"><rect x="0" y="0" width="3.800" height="3" fill="#ecbb4e"/><path d="M1.900 3v5.500h3.800M1.900 5h3.800" stroke="#7aa6d6" stroke-width=".7" fill="none"/><rect x="6" y="3.600" width="4" height="2.700" fill="#e6a044"/><rect x="6" y="7.200" width="4" height="2.700" fill="#e6a044"/></svg>
<svg style="left:375.3px;top:338.4px" width="8" height="10" viewBox="0 0 8 10"><path d="M.5.5h5l2 2v7H.5z" fill="#c9e2f9" stroke="#86b6e6" stroke-width=".8"/><path d="M4.500 3v3.600" stroke="#2b6cb8" stroke-width=".8"/><circle cx="3.700" cy="6.800" r="1" fill="#2b6cb8"/></svg>
<svg style="left:374.3px;top:356.9px" width="10" height="9" viewBox="0 0 10 9"><rect x=".4" y=".4" width="9.200" height="6.600" fill="#d6e8f8" stroke="#6585ab" stroke-width=".8"/><path d="M3 2h1.700v1.500H3zM5.200 2h1.700v1.500H5.200zM3 4h1.700v1.500H3zM5.200 4h1.700v1.500H5.200z" fill="#2b6cb8"/><rect x="2.500" y="7.800" width="5" height="1" fill="#4d6f96"/></svg>
<svg style="left:374.6px;top:370.0px" width="10.400" height="10.400" viewBox="0 0 10 10"><circle cx="5" cy="5" r="3.600" fill="none" stroke="#8490a6" stroke-width="1.700" stroke-dasharray="1.700 1.130"/><circle cx="5" cy="5" r="2.900" fill="#f2f2f2" stroke="#8490a6" stroke-width=".8"/><circle cx="5" cy="5" r="1.200" fill="none" stroke="#8490a6" stroke-width=".7"/></svg>
<div class="menu" style="left:521.300px;top:335.200px;width:150px;height:74px"></div>
<svg style="left:529.5px;top:340.1px" width="8" height="10" viewBox="0 0 8 10"><path d="M.5.5h5l2 2v7H.5z" fill="#c9e2f9" stroke="#86b6e6" stroke-width=".8"/><path d="M4.500 3v3.600" stroke="#2b6cb8" stroke-width=".8"/><circle cx="3.700" cy="6.800" r="1" fill="#2b6cb8"/></svg>
<svg style="left:528.7px;top:353.9px" width="10.600" height="10" viewBox="0 0 10.600 10"><rect x="0" y="0" width="3.800" height="3" fill="#ecbb4e"/><path d="M1.900 3v5.500h3.800M1.900 5h3.800" stroke="#7aa6d6" stroke-width=".7" fill="none"/><rect x="6" y="3.600" width="4" height="2.700" fill="#e6a044"/><rect x="6" y="7.200" width="4" height="2.700" fill="#e6a044"/></svg>
<svg style="left:528.500px;top:367.100px" width="10" height="10" viewBox="0 0 10 10"><path d="M1.500 0h7L10 2.500H0z" fill="#2d7fd3"/><rect x=".4" y="2.500" width="9.200" height="7" fill="#eaf3fb" stroke="#2d7fd3" stroke-width=".8"/><path d="M4 4.500L6.500 6 4 7.500z" fill="#2d7fd3"/></svg>
<div class="t" style="left:543.1px;top:340.2px;color:#222">Change File Tags (mp3 &amp; m4a files)</div>
<div class="t" style="left:543.1px;top:354.0px;color:#222">Classify by Tag</div>
<div class="t" style="left:543.1px;top:367.2px;color:#222">Quick Playlist Creator</div>
<div class="a" style="left:529.2px;top:379.1px;width:132.3px;height:60.0px;background:#383838;"></div>
<div class="a" style="left:528.300px;top:369px;width:136px;height:65px;line-height:65px;font-size:45px;font-weight:700;color:#fff;letter-spacing:-1.500px;white-space:nowrap;overflow:hidden;font-family:'Liberation Sans','Noto Sans CJK SC',sans-serif">下载吧</div>
<div class="a" style="left:554.300px;top:421.800px;height:14px;line-height:14px;font-size:12px;color:#f4f4f4;letter-spacing:.43px;white-space:nowrap">www.xiazaiba.com</div>
</div>
</body></html>
